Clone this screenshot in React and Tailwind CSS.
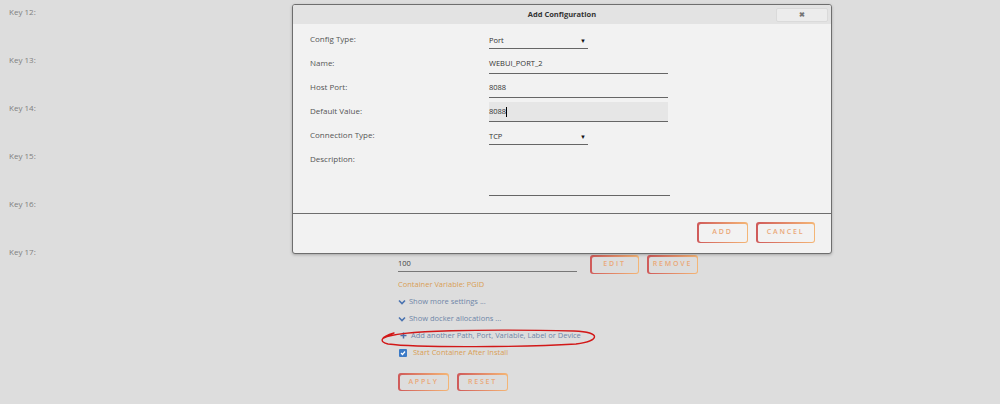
import React from 'react';

function Btn({ label, w, inner }) {
  return (
    <div className={`${w} h-full rounded-[3px] p-[1.5px] bg-gradient-to-r from-[#cf5a5a] to-[#f4b676]`}>
      <div className={`${inner} w-full h-full rounded-[2px] flex items-center justify-center text-[7px] font-semibold tracking-[1.8px] text-[#eaa878]`}>
        {label}
      </div>
    </div>
  );
}

function ModalRow({ label, children }) {
  return (
    <div className="h-[24px] flex items-start">
      <div className="w-[179px] pt-[4px] leading-[12px] text-[8px] text-[#555]">{label}</div>
      {children}
    </div>
  );
}

function Select({ value }) {
  return (
    <div className="mt-[1px] w-[99px] h-[19px] border-b border-[#666] flex items-end justify-between pb-[2px] pr-[2px] text-[7.5px] text-[#333]">
      <span>{value}</span>
      <span className="text-[6px] text-[#111]">▼</span>
    </div>
  );
}

function Input({ value, shaded, caret }) {
  return (
    <div className={`${shaded ? 'bg-[#e6e6e6]' : ''} mt-[1px] w-[179px] h-[20px] border-b border-[#666] flex items-center pt-[1px] text-[7.5px] text-[#333]`}>
      <span>{value}</span>
      {caret && <span className="w-[1px] h-[10px] bg-black" />}
    </div>
  );
}

export default function App() {
  const keys = ['Key 12:', 'Key 13:', 'Key 14:', 'Key 15:', 'Key 16:'];
  return (
    <div className="relative w-full h-[404px] overflow-hidden bg-[#dddddd] font-['Open_Sans',sans-serif]">
      {/* page behind the dialog */}
      <div className="pt-[6px] flex flex-col">
        {keys.map((k) => (
          <div key={k} className="h-[48px] pl-[9px] leading-[12px] text-[8px] text-[#808080]">{k}</div>
        ))}
        <div className="flex">
          <div className="w-[398px] pl-[9px] leading-[12px] text-[8px] text-[#808080]">Key 17:</div>
          <div className="flex flex-col pt-[9px]">
            <div className="flex h-[19px] gap-[13px]">
              <div className="w-[179px] h-[17px] border-b border-[#777] flex items-center pt-[1px] text-[7.5px] text-[#444]">100</div>
              <div className="flex gap-[8px] h-[19px]">
                <Btn label="EDIT" w="w-[49px]" inner="bg-[#dddddd]" />
                <Btn label="REMOVE" w="w-[51px]" inner="bg-[#dddddd]" />
              </div>
            </div>
            <div className="mt-[2px] h-[17px] flex items-center text-[7.5px] text-[#d99e55]">Container Variable: PGID</div>
            <div className="h-[17px] flex items-center gap-[3px] text-[7.5px] text-[#6f86a8]">
              <svg width="8" height="6" viewBox="0 0 8 6"><path d="M1 1.5 L4 4.5 L7 1.5" stroke="#4a73b0" strokeWidth="1.6" fill="none" /></svg>
              <span>Show more settings ...</span>
            </div>
            <div className="h-[17px] flex items-center gap-[3px] text-[7.5px] text-[#6f86a8]">
              <svg width="8" height="6" viewBox="0 0 8 6"><path d="M1 1.5 L4 4.5 L7 1.5" stroke="#4a73b0" strokeWidth="1.6" fill="none" /></svg>
              <span>Show docker allocations ...</span>
            </div>
            <div className="h-[17px] flex items-center gap-[4px] pl-[2px] text-[7.5px] text-[#6f86a8]">
              <svg width="7" height="7" viewBox="0 0 7 7"><path d="M3.5 0.5 V6.5 M0.5 3.5 H6.5" stroke="#4a6ea8" strokeWidth="1.5" /></svg>
              <span>Add another Path, Port, Variable, Label or Device</span>
            </div>
            <div className="h-[17px] flex items-center gap-[6px] pl-[1px] text-[7.5px] text-[#d99e55]">
              <span className="w-[8px] h-[8px] rounded-[1px] bg-[#3b7ac6] flex items-center justify-center">
                <svg width="6" height="6" viewBox="0 0 6 6"><path d="M1 3 L2.5 4.5 L5 1.5" stroke="white" strokeWidth="1.2" fill="none" /></svg>
              </span>
              <span>Start Container After Install</span>
            </div>
            <div className="mt-[12px] flex gap-[8px] h-[18px]">
              <Btn label="APPLY" w="w-[51px]" inner="bg-[#dddddd]" />
              <Btn label="RESET" w="w-[51px]" inner="bg-[#dddddd]" />
            </div>
          </div>
        </div>
      </div>

      {/* red hand-drawn annotation */}
      <svg className="absolute left-[378px] top-[326px]" width="224" height="24" viewBox="0 0 224 24">
        <path d="M6 12 C18 4, 110 3, 196 5 C224 6, 222 15, 198 18 C150 21, 40 22, 10 18 C1 16, 2 11, 16 7" stroke="#d21818" strokeWidth="1.4" fill="none" strokeLinecap="round" />
      </svg>

      {/* Add Configuration dialog */}
      <div className="absolute left-[292px] top-[4px] w-[540px] border border-[#6e6e6e] rounded-[3px] bg-[#f2f2f2] shadow-[0_1px_3px_rgba(0,0,0,0.25)] overflow-hidden">
        <div className="relative h-[19px] bg-[#e3e3e3] flex items-center justify-center text-[7.5px] font-bold text-[#333]">
          Add Configuration
          <div className="absolute right-[3px] top-[3px] w-[52px] h-[14px] bg-[#ececec] border border-[#dadada] rounded-[2px] flex items-center justify-center text-[7px] text-[#777]">✖</div>
        </div>
        <div className="pt-[5px] pl-[17px]">
          <ModalRow label="Config Type:"><Select value="Port" /></ModalRow>
          <ModalRow label="Name:"><Input value="WEBUI_PORT_2" /></ModalRow>
          <ModalRow label="Host Port:"><Input value="8088" /></ModalRow>
          <ModalRow label="Default Value:"><Input value="8088" shaded caret /></ModalRow>
          <ModalRow label="Connection Type:"><Select value="TCP" /></ModalRow>
          <div className="h-[47px] flex items-start">
            <div className="w-[179px] pt-[4px] leading-[12px] text-[8px] text-[#555]">Description:</div>
            <div className="w-[181px] h-[47px] border-b border-[#666]" />
          </div>
        </div>
        <div className="mt-[17px] border-t border-[#6e6e6e] h-[40px] flex justify-end items-start gap-[8px] pt-[8px] pr-[16px]">
          <div className="h-[21px] flex gap-[8px]">
            <Btn label="ADD" w="w-[51px]" inner="bg-[#f2f2f2]" />
            <Btn label="CANCEL" w="w-[59px]" inner="bg-[#f2f2f2]" />
          </div>
        </div>
      </div>
    </div>
  );
}
